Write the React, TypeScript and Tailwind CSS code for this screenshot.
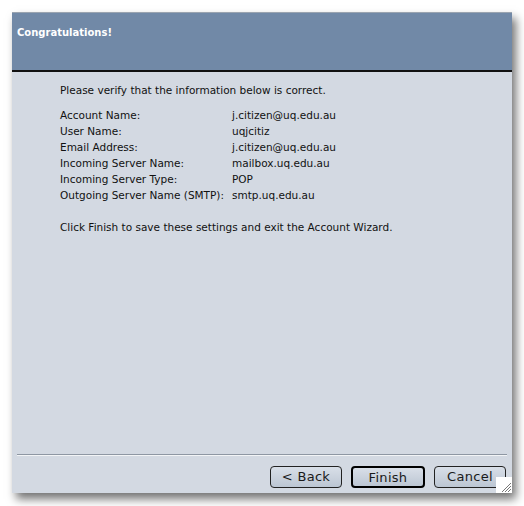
import React from 'react';

const rows: [string, string][] = [
  ['Account Name:', 'j.citizen@uq.edu.au'],
  ['User Name:', 'uqjcitiz'],
  ['Email Address:', 'j.citizen@uq.edu.au'],
  ['Incoming Server Name:', 'mailbox.uq.edu.au'],
  ['Incoming Server Type:', 'POP'],
  ['Outgoing Server Name (SMTP):', 'smtp.uq.edu.au'],
];

function WizButton({ label, primary }: { label: string; primary?: boolean }) {
  return (
    <button
      className={`h-[22px] rounded-[4px] bg-gradient-to-b from-[#d9dfe8] to-[#bcc6d3] text-[13px] tracking-[0.3px] text-[#1a1a1a] ${
        primary ? 'w-[74px] border-2 border-black' : 'w-[72px] border border-[#222]'
      }`}
    >
      {label}
    </button>
  );
}

export default function App() {
  return (
    <div className="w-[524px] h-[506px] bg-white pl-[12px] pt-[12px] font-['DejaVu_Sans',sans-serif]">
      <div className="relative w-[500px] h-[481px] flex flex-col bg-[#d3d9e2] border-t border-[#9aa4b0] shadow-[4px_6px_9px_rgba(0,0,0,0.55)]">
        <div className="h-[59px] bg-[#7189a7] border-b-2 border-[#111] px-[5px] pt-[12px]">
          <h1 className="text-[10px] font-bold text-white">Congratulations!</h1>
        </div>
        <div className="flex-1 pl-[48px] pt-[10px] text-[10.5px] text-[#111] leading-[16px]">
          <p>Please verify that the information below is correct.</p>
          <div className="mt-[9px] grid grid-cols-[172px_1fr]">
            {rows.map(([k, v]) => (
              <React.Fragment key={k}>
                <span>{k}</span>
                <span>{v}</span>
              </React.Fragment>
            ))}
          </div>
          <p className="mt-[16px]">Click Finish to save these settings and exit the Account Wizard.</p>
        </div>
        <div className="mx-[5px] border-t border-[#8e97a3] border-b border-b-white/70" />
        <div className="flex justify-end gap-[9px] pr-[6px] pt-[10px] pb-[3px] h-[37px]">
          <WizButton label="< Back" />
          <WizButton label="Finish" primary />
          <WizButton label="Cancel" />
        </div>
        <svg className="absolute right-0 bottom-0" width="16" height="16" viewBox="0 0 16 16">
          <rect width="16" height="16" fill="#ffffff" />
          <path d="M6 15 L15 6 M9 15 L15 9 M12 15 L15 12" stroke="#777" strokeWidth="1" />
        </svg>
      </div>
    </div>
  );
}
